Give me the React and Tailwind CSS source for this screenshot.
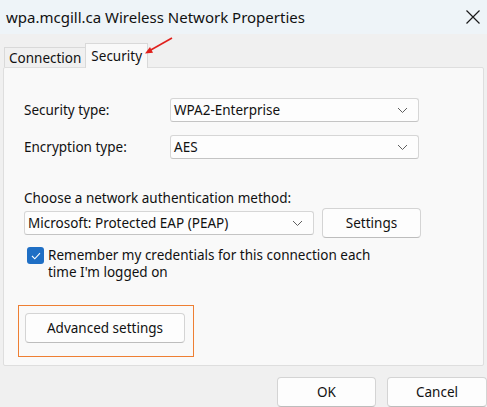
import React from "react";

function Chevron() {
  return (
    <svg width="11" height="7" viewBox="0 0 11 7" className="shrink-0">
      <path d="M1 1l4.5 4.5L10 1" fill="none" stroke="#5f5f5f" strokeWidth="1" />
    </svg>
  );
}

function Select({ value, className = "" }) {
  return (
    <div
      className={`flex items-center justify-between h-[24px] bg-[#fdfdfd] border border-[#d6d6d6] border-b-[#c4c4c4] rounded-[3px] pl-[3px] pr-[10px] ${className}`}
    >
      <span>{value}</span>
      <Chevron />
    </div>
  );
}

function Button({ children, className = "" }) {
  return (
    <div
      className={`flex items-center justify-center h-[30px] bg-[#fdfdfd] border border-[#d4d4d4] border-b-[#bdbdbd] rounded-[4px] ${className}`}
    >
      {children}
    </div>
  );
}

export default function App() {
  return (
    <div
      className="relative w-[487px] h-[407px] overflow-hidden bg-[#f0f0f0] text-[13.5px] leading-[16px] text-[#111111]"
      style={{ fontFamily: '"Noto Sans", "Open Sans", sans-serif' }}
    >
      {/* title bar */}
      <div className="flex items-center justify-between h-[34px] bg-[#eef4f8] pl-[6px] pr-[7px]">
        <span className="text-[15px]">wpa.mcgill.ca Wireless Network Properties</span>
        <svg width="14" height="14" viewBox="0 0 14 14">
          <path d="M0.5 0.5l13 13M13.5 0.5l-13 13" stroke="#1a1a1a" strokeWidth="1.2" />
        </svg>
      </div>

      {/* tabs */}
      <div className="flex items-end h-[33px] pl-[4px]">
        <div className="flex items-center h-[20px] px-[4px] bg-[#f0f0f0] border border-b-0 border-[#d9d9d9] border-r-0">
          Connection
        </div>
        <div className="relative z-10 flex items-center h-[25px] px-[5px] bg-[#f9f9f9] border border-b-0 border-[#d9d9d9] -mb-[1px]">
          Security
        </div>
      </div>

      {/* panel */}
      <div className="ml-[3px] w-[481px] h-[299px] bg-[#f9f9f9] border border-[#dedede] rounded-[2px]">
        <div className="pl-[20px] pt-[30px]">
          <div className="flex items-center">
            <span className="w-[146px]">Security type:</span>
            <Select value="WPA2-Enterprise" className="w-[249px]" />
          </div>
          <div className="flex items-center mt-[13px]">
            <span className="w-[146px]">Encryption type:</span>
            <Select value="AES" className="w-[249px]" />
          </div>

          <div className="mt-[31px]">Choose a network authentication method:</div>
          <div className="flex items-center gap-[8px] mt-[2px]">
            <Select value="Microsoft: Protected EAP (PEAP)" className="w-[290px]" />
            <Button className="w-[99px]">Settings</Button>
          </div>

          <div className="flex items-start mt-[9px] ml-[3px]">
            <div className="flex items-center justify-center w-[17px] h-[17px] rounded-[3px] bg-[#1f6fc5] shrink-0">
              <svg width="10" height="8" viewBox="0 0 10 8">
                <path d="M1 4l2.8 2.8L9 1.2" fill="none" stroke="#ffffff" strokeWidth="1.1" />
              </svg>
            </div>
            <div className="ml-[4px] leading-[17px]">
              <div>Remember my credentials for this connection each</div>
              <div>time I'm logged on</div>
            </div>
          </div>

          <div className="mt-[24px] -ml-[6px] w-[176px] h-[52px] border border-[#ee7f33] pl-[6px] pt-[7px]">
            <Button className="w-[160px]">Advanced settings</Button>
          </div>
        </div>
      </div>

      {/* footer */}
      <div className="flex justify-end gap-[11px] mt-[11px]">
        <Button className="w-[99px] border-[#0067c0] border-b-[#0067c0]">OK</Button>
        <Button className="w-[100px]">Cancel</Button>
      </div>

      {/* red annotation arrow */}
      <svg className="absolute left-0 top-0 z-20 pointer-events-none" width="487" height="407">
        <path d="M172 38L149 51" stroke="#e0201c" strokeWidth="1.6" fill="none" />
        <path d="M145 53.5l8-0.8-3-5.6z" fill="#e0201c" />
      </svg>
    </div>
  );
}
